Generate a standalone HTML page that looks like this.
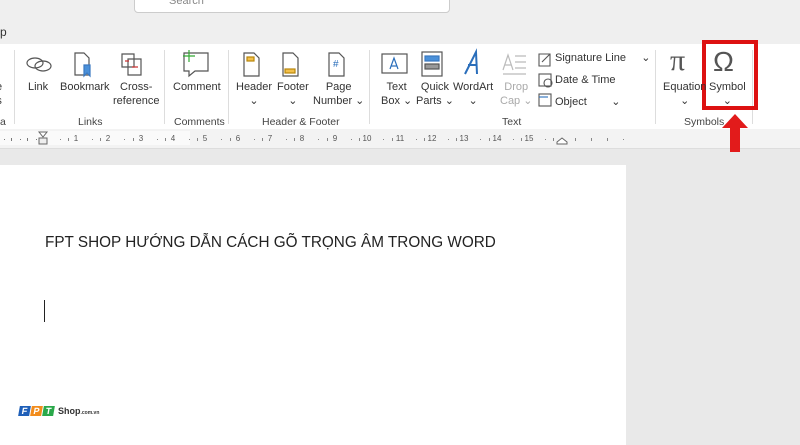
<!DOCTYPE html><html><head><style>
body{margin:0;width:800px;height:445px;overflow:hidden;background:#e9e9e9;font-family:"Liberation Sans",sans-serif;position:relative}
.a{position:absolute}
.t{font-size:11px;color:#333;text-align:center;line-height:13.5px}
.g{font-size:10.5px;color:#444}
.sep{position:absolute;top:50px;width:1px;height:74px;background:#ddd}
.n{position:absolute;top:134px;font-size:8px;color:#555;transform:translateX(-50%)}
</style></head><body>
<div class="a" style="left:0;top:0;width:800px;height:44px;background:#efefef"></div>
<div class="a" style="left:134px;top:-4px;width:314px;height:15px;background:#fff;border:1px solid #ccc;border-radius:4px"><span style="position:absolute;left:34px;top:-2px;font-size:11px;color:#888">Search</span></div>
<div class="a" style="left:0;top:25px;font-size:12px;color:#333">p</div>
<div class="a" style="left:0;top:44px;width:800px;height:85px;background:#fff"></div>
<div class="a" style="left:0;top:129px;width:800px;height:19px;background:#f3f3f3;border-bottom:1px solid #ddd"></div>
<div class="a" style="left:0;top:131px;width:190px;height:14px;background:#fafafa"></div>
<div id="r"></div>
<svg class="a" style="left:0;top:130px" width="800" height="20">
<g fill="#777">
<rect x="4" y="9" width="1" height="1"/><rect x="11" y="8" width="1" height="3"/><rect x="20" y="9" width="1" height="1"/><rect x="27" y="8" width="1" height="3"/><rect x="36" y="9" width="1" height="1"/>
</g>
<path d="M39 2h8l-4 5zM39 14h8v-6l-4 0-4 0z" fill="#fff" stroke="#666"/>
<path d="M39 8h8v6h-8z" fill="#eee" stroke="#666"/>
<path d="M557 12l5-4 5 4v2h-10z" fill="#fff" stroke="#666"/>
</svg>
<div class="n" style="left:76px">1</div><div class="n" style="left:108px">2</div><div class="n" style="left:141px">3</div><div class="n" style="left:173px">4</div><div class="n" style="left:205px">5</div><div class="n" style="left:238px">6</div><div class="n" style="left:270px">7</div><div class="n" style="left:302px">8</div><div class="n" style="left:335px">9</div><div class="n" style="left:367px">10</div><div class="n" style="left:400px">11</div><div class="n" style="left:432px">12</div><div class="n" style="left:464px">13</div><div class="n" style="left:497px">14</div><div class="n" style="left:529px">15</div>
<svg class="a" style="left:0;top:130px" width="800" height="20" fill="#888">
<g id="tk"></g>
<path d="M60 9h1v1h-1zM68 8h1v3h-1zM92 9h1v1h-1zM100 8h1v3h-1zM124 9h1v1h-1zM133 8h1v3h-1zM157 9h1v1h-1zM165 8h1v3h-1zM189 9h1v1h-1zM197 8h1v3h-1zM221 9h1v1h-1zM230 8h1v3h-1zM254 9h1v1h-1zM262 8h1v3h-1zM286 9h1v1h-1zM294 8h1v3h-1zM318 9h1v1h-1zM327 8h1v3h-1zM351 9h1v1h-1zM359 8h1v3h-1zM383 9h1v1h-1zM392 8h1v3h-1zM416 9h1v1h-1zM424 8h1v3h-1zM448 9h1v1h-1zM456 8h1v3h-1zM480 9h1v1h-1zM489 8h1v3h-1zM513 9h1v1h-1zM521 8h1v3h-1zM545 9h1v1h-1zM553 8h1v3h-1zM575 8h1v3h-1zM591 8h1v3h-1zM607 8h1v3h-1zM623 9h1v1h-1z"/>
</svg>
<div class="a" style="left:0;top:165px;width:626px;height:280px;background:#fff"></div>
<div class="sep" style="left:14px"></div><div class="sep" style="left:164px"></div><div class="sep" style="left:228px"></div><div class="sep" style="left:369px"></div><div class="sep" style="left:655px"></div><div class="sep" style="left:752px"></div>
<svg class="a" style="left:0;top:48px" width="800" height="36" fill="none" stroke="#555" stroke-width="1.2">
<ellipse cx="35" cy="15" rx="8" ry="5"/><ellipse cx="43" cy="18" rx="8" ry="5"/>
<path d="M75 5h9l5 5v17h-14z"/><path d="M90 17v11l-3-3-3 3v-11z" fill="#4a90d9" stroke="#3a78c0"/>
<path d="M122 6h12v13h-12zM128 11h13v16h-13z"/><path d="M125 13h4M132 19h6" stroke="#c33"/>
<path d="M184 5h24v18h-13l-6 5v-5h-5z"/><path d="M189 2v12M183 8h12" stroke="#3a3"/>
<path d="M244 5h10l5 5v18h-15z"/><rect x="247" y="9" width="7" height="4" fill="#f3c04a" stroke="#b8860b"/>
<path d="M283 5h10l5 5v18h-15z"/><rect x="285" y="21" width="10" height="4" fill="#f3c04a" stroke="#b8860b"/>
<path d="M329 5h10l5 5v18h-15z"/>
<rect x="382" y="6" width="25" height="19"/><path d="M390 21l4-11 4 11M391 18h6" stroke="#2a6ebb"/>
<rect x="422" y="4" width="20" height="24"/><rect x="425" y="8" width="14" height="5" fill="#4a90d9" stroke="#3a78c0"/><rect x="425" y="16" width="14" height="5" fill="#999"/>
<path d="M465 26l11-22 1 22M468 17h9" stroke="#2a6ebb" stroke-width="2"/>
<path d="M503 22l5-15 5 15M505 17h6M515 8h11M515 14h11M515 20h11M503 26h23" stroke="#bbb"/>
</svg>
<svg class="a" style="left:536px;top:50px" width="20" height="60" fill="none" stroke="#555" stroke-width="1.1"><path d="M3 4h11v12h-11zM6 12l8-8" /><rect x="3" y="24" width="12" height="12"/><circle cx="12" cy="33" r="4"/><rect x="3" y="44" width="12" height="12"/><path d="M3 47h9" stroke="#2a6ebb"/></svg>
<div class="a" style="left:333px;top:59px;font-size:10px;color:#2a6ebb">#</div>
<div class="a" style="left:670px;top:44px;font-size:30px;color:#555;font-family:'Liberation Serif',serif">π</div>
<div class="a" style="left:713px;top:46px;font-size:28px;color:#555">Ω</div>
<div class="a" style="left:702px;top:40px;width:48px;height:62px;border:4px solid #d11"></div>
<svg class="a" style="left:720px;top:114px" width="30" height="40"><path d="M15 0L28 14H20V38H10V14H2Z" fill="#e21b1b"/></svg>
<div class="a t" style="left:-4px;top:81px">e<br>s</div>
<div class="a t" style="left:28px;top:81px">Link</div>
<div class="a t" style="left:60px;top:81px">Bookmark</div>
<div class="a t" style="left:113px;top:81px">Cross-<br>reference</div>
<div class="a t" style="left:173px;top:81px">Comment</div>
<div class="a t" style="left:236px;top:81px">Header<br>⌄</div>
<div class="a t" style="left:277px;top:81px">Footer<br>⌄</div>
<div class="a t" style="left:313px;top:81px">Page<br>Number ⌄</div>
<div class="a t" style="left:381px;top:81px">Text<br>Box ⌄</div>
<div class="a t" style="left:416px;top:81px">Quick<br>Parts ⌄</div>
<div class="a t" style="left:453px;top:81px">WordArt<br>⌄</div>
<div class="a t" style="left:500px;top:81px;color:#aaa">Drop<br>Cap ⌄</div>
<div class="a t" style="left:555px;top:52px;text-align:left">Signature Line &nbsp; &nbsp; ⌄</div>
<div class="a t" style="left:555px;top:74px;text-align:left">Date &amp; Time</div>
<div class="a t" style="left:555px;top:96px;text-align:left">Object &nbsp; &nbsp; &nbsp; &nbsp;⌄</div>
<div class="a t" style="left:663px;top:81px">Equation<br>⌄</div>
<div class="a t" style="left:709px;top:81px">Symbol<br>⌄</div>
<div class="a g" style="left:0;top:116px">a</div>
<div class="a g" style="left:78px;top:116px">Links</div>
<div class="a g" style="left:174px;top:116px">Comments</div>
<div class="a g" style="left:262px;top:116px">Header &amp; Footer</div>
<div class="a g" style="left:502px;top:116px">Text</div>
<div class="a g" style="left:684px;top:116px">Symbols</div>
<div class="a" style="left:45px;top:234px;font-size:15.3px;color:#222">FPT SHOP HƯỚNG DẪN CÁCH GÕ TRỌNG ÂM TRONG WORD</div>
<div class="a" style="left:44px;top:300px;width:1px;height:22px;background:#222"></div>
<div class="a" style="left:19px;top:406px;display:flex;gap:1px">
<span style="background:#1f5fb8;color:#fff;font:bold 9px sans-serif;width:11px;text-align:center;transform:skewX(-10deg)">F</span><span style="background:#f28c1c;color:#fff;font:bold 9px sans-serif;width:11px;text-align:center;transform:skewX(-10deg)">P</span><span style="background:#2aa84a;color:#fff;font:bold 9px sans-serif;width:11px;text-align:center;transform:skewX(-10deg)">T</span>
<span style="font:bold 9px sans-serif;color:#333;margin-left:3px">Shop<span style="font-size:5px">.com.vn</span></span></div>
</body></html>
